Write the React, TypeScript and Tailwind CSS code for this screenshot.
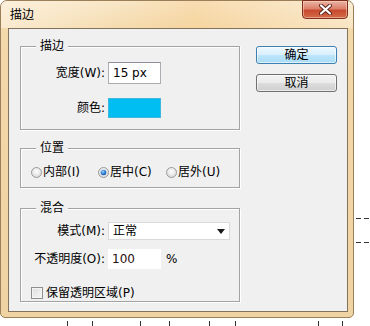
import React from "react";

function Radio({ checked }: { checked?: boolean }) {
  return (
    <svg width="11" height="11" viewBox="0 0 11 11" className="shrink-0">
      <defs>
        <radialGradient id={checked ? "rg1" : "rg0"} cx="50%" cy="40%" r="60%">
          <stop offset="0%" stopColor="#ffffff" />
          <stop offset="100%" stopColor="#d8d8d8" />
        </radialGradient>
        <radialGradient id="dot" cx="40%" cy="35%" r="70%">
          <stop offset="0%" stopColor="#9fd3f7" />
          <stop offset="60%" stopColor="#2a7ad0" />
          <stop offset="100%" stopColor="#124f9c" />
        </radialGradient>
      </defs>
      <circle cx="5.5" cy="5.5" r="5" fill={`url(#${checked ? "rg1" : "rg0"})`} stroke="#9a9a9a" strokeWidth="1" />
      {checked && <circle cx="5.5" cy="5.5" r="2.8" fill="url(#dot)" />}
    </svg>
  );
}

function Group({ label, className, children }: { label: string; className: string; children?: React.ReactNode }) {
  return (
    <div className={`relative border border-[#a3a3a3] shadow-[inset_1px_1px_0_#ffffff,1px_1px_0_#ffffff] ${className}`}>
      <span className="absolute -top-[9px] left-[15px] px-[4px] bg-[#f0f0f0] leading-[16px]">{label}</span>
      {children}
    </div>
  );
}

export default function App() {
  const ticks = [67, 92, 140, 169, 209, 235, 318, 342];
  return (
    <div className="relative w-[370px] h-[326px] overflow-hidden bg-white text-[12px] leading-[16px] text-black font-['DejaVu_Sans','Noto_Sans_CJK_SC',sans-serif]">
      <div className="w-[354px] h-[318px] flex flex-col rounded-t-[7px] rounded-b-[5px] border border-[#9a7f58] bg-[linear-gradient(to_bottom,#f8e7ca,#f3d8aa_30px,#f0d3a2)]">
        {/* title bar */}
        <div className="h-[27px] flex items-start shrink-0 rounded-t-[6px] bg-[linear-gradient(to_right,rgba(255,248,235,0.55),rgba(250,222,175,0.15)_35%,rgba(248,205,140,0.4)_55%,rgba(255,245,228,0.4))]">
          <span className="pl-[9px] pt-[6px] text-[12px] leading-[16px]">描边</span>
          <div className="ml-auto mr-[5px] -mt-px w-[46px] h-[19px] rounded-b-[4px] border border-[#7d2e1c] flex items-center justify-center bg-[linear-gradient(to_bottom,#eab4a4_0%,#dc806b_45%,#c84a2e_55%,#d26a48_100%)] shadow-[inset_0_0_0_1px_rgba(255,220,200,0.5)]">
            <svg width="13" height="11" viewBox="0 0 13 11">
              <path d="M2 1.5 L11 9.5 M11 1.5 L2 9.5" stroke="#5a2218" strokeWidth="4" strokeLinecap="round" />
              <path d="M2 1.5 L11 9.5 M11 1.5 L2 9.5" stroke="#ffffff" strokeWidth="2.2" strokeLinecap="round" />
            </svg>
          </div>
        </div>
        {/* body */}
        <div className="flex-1 flex pl-[7px] pr-[5px] pb-[5px]">
          <div className="flex-1 flex border border-[#84735c] bg-[#f0f0f0]">
            {/* left column */}
            <div className="ml-[11px] mt-[17px] w-[220px] flex flex-col">
              <Group label="描边" className="h-[84px]">
                <div className="mt-[15px] flex items-center">
                  <span className="w-[84px] text-right">宽度(W):</span>
                  <div className="ml-[3px] w-[53px] h-[22px] bg-white border border-[#abadb3] border-t-[#8e9099] flex items-center pl-[4px]">15 px</div>
                </div>
                <div className="mt-[14px] flex items-center">
                  <span className="w-[84px] text-right">颜色:</span>
                  <div className="ml-[3px] w-[53px] h-[20px] bg-[#00bef2] border border-[#3fb6dc]" />
                </div>
              </Group>
              <Group label="位置" className="mt-[18px] h-[40px]">
                <div className="mt-[15px] h-[16px] pl-[10px] flex items-center">
                  <div className="w-[67px] flex items-center">
                    <Radio />
                    <span className="ml-[1px]">内部(I)</span>
                  </div>
                  <div className="w-[68px] flex items-center">
                    <Radio checked />
                    <span className="ml-[1px]">居中(C)</span>
                  </div>
                  <div className="flex items-center">
                    <Radio />
                    <span className="ml-[1px]">居外(U)</span>
                  </div>
                </div>
              </Group>
              <Group label="混合" className="mt-[20px] h-[94px]">
                <div className="mt-[13px] flex items-center">
                  <span className="w-[84px] text-right">模式(M):</span>
                  <div className="ml-[3px] w-[122px] h-[18px] bg-white border border-[#d9d9d9] flex items-center pl-[4px] pr-[4px]">
                    <span>正常</span>
                    <svg className="ml-auto" width="8" height="5" viewBox="0 0 8 5">
                      <path d="M0 0 H8 L4 5 Z" fill="#1a1a1a" />
                    </svg>
                  </div>
                </div>
                <div className="mt-[9px] flex items-center">
                  <span className="w-[84px] text-right">不透明度(O):</span>
                  <div className="ml-[3px] w-[53px] h-[20px] bg-white flex items-center pl-[4px] text-[#2a0f0f]">100</div>
                  <span className="ml-[5px]">%</span>
                </div>
                <div className="mt-[16px] h-[16px] pl-[10px] flex items-center">
                  <div className="w-[12px] h-[12px] border border-[#8e8f8f] bg-[linear-gradient(135deg,#dcdcdc,#f8f8f8)] shadow-[inset_0_0_0_1px_#f4f4f4]" />
                  <span className="ml-[3px]">保留透明区域(P)</span>
                </div>
              </Group>
            </div>
            {/* right column */}
            <div className="ml-[16px] mt-[17px] w-[81px] flex flex-col gap-[10px]">
              <div className="h-[18px] rounded-[3px] border border-[#3c7fb1] flex items-center justify-center bg-[linear-gradient(to_bottom,#eef8fe_0%,#d8effc_50%,#bee6fd_50%,#a9dbf6_100%)] shadow-[inset_0_0_0_1px_rgba(255,255,255,0.6)]">确定</div>
              <div className="h-[18px] rounded-[3px] border border-[#707070] flex items-center justify-center bg-[linear-gradient(to_bottom,#f2f2f2_0%,#ebebeb_50%,#dddddd_50%,#cfcfcf_100%)] shadow-[inset_0_0_0_1px_rgba(255,255,255,0.6)]">取消</div>
            </div>
          </div>
        </div>
      </div>
      {ticks.map((x) => (
        <div key={x} className="absolute top-[321px] w-px h-[5px] bg-[#333]" style={{ left: x }} />
      ))}
      <div className="absolute left-[356px] top-[218px] w-[5px] h-px bg-[#333]" />
      <div className="absolute left-[364px] top-[218px] w-[5px] h-px bg-[#333]" />
      <div className="absolute left-[356px] top-[242px] w-[5px] h-px bg-[#333]" />
      <div className="absolute left-[364px] top-[242px] w-[5px] h-px bg-[#333]" />
    </div>
  );
}
